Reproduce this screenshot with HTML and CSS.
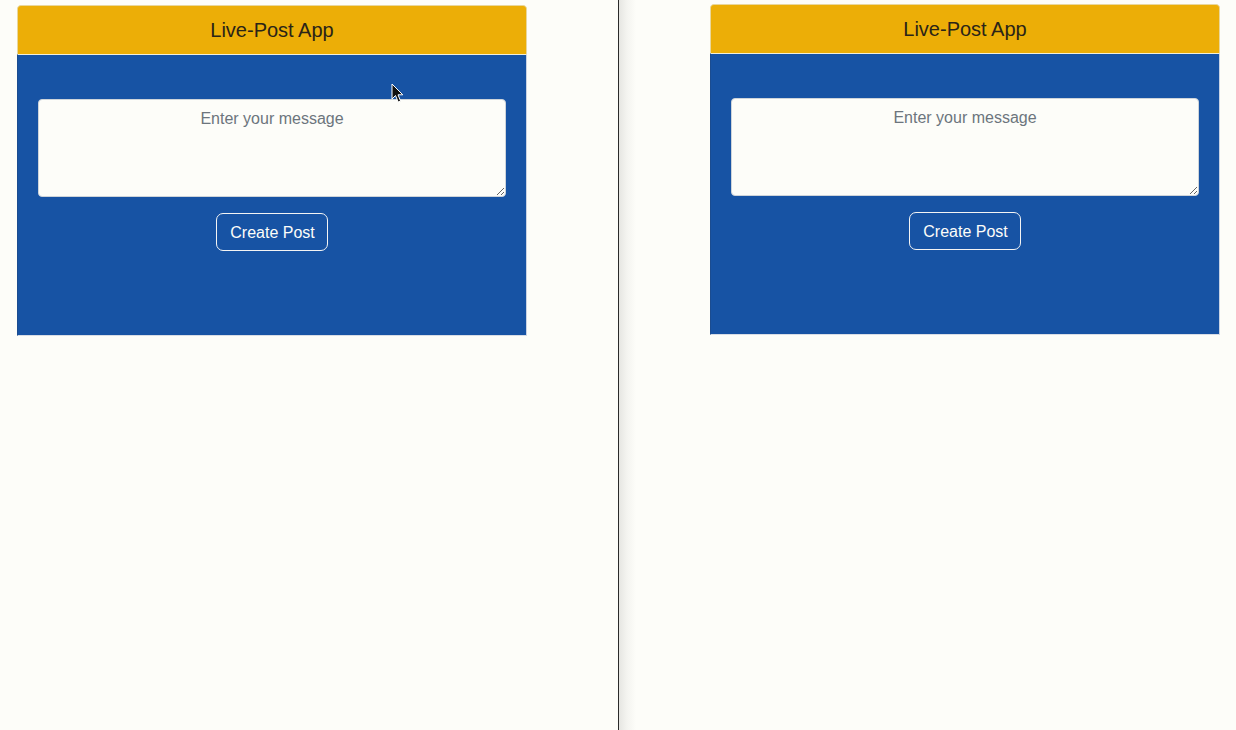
FILE: index.html
```html
<!DOCTYPE html>
<html lang="en">
<head>
<meta charset="utf-8">
<title>Live-Post App</title>
<link rel="stylesheet" href="styles.css">
</head>
<body>
<div class="screen">
  <div class="pane pane-left">
    <div class="card">
      <div class="card-header">Live-Post App</div>
      <div class="card-body">
        <textarea class="message" placeholder="Enter your message"></textarea>
        <button class="btn">Create Post</button>
      </div>
    </div>
    <svg class="cursor" width="14" height="21" viewBox="0 0 14 21"><path d="M1 1 L1 16 L4.5 12.5 L7.2 19 L9.6 18 L7 11.8 L11.8 11.8 Z" fill="#111" stroke="#fff" stroke-width="1"/></svg>
  </div>
  <div class="divider"></div>
  <div class="pane pane-right">
    <div class="card">
      <div class="card-header">Live-Post App</div>
      <div class="card-body">
        <textarea class="message" placeholder="Enter your message"></textarea>
        <button class="btn">Create Post</button>
      </div>
    </div>
  </div>
</div>
</body>
</html>
```
FILE: styles.css
```css
html, body {
  margin: 0;
  padding: 0;
  height: 100%;
  background: #fdfdf9;
  font-family: "Liberation Sans", Arial, sans-serif;
}
.screen {
  display: flex;
  height: 730px;
  width: 1236px;
}
.pane {
  position: relative;
  box-sizing: border-box;
}
.pane-left {
  width: 618px;
  padding: 5px 0 0 17px;
}
.pane-right {
  flex: 1;
  padding: 4px 0 0 91px;
  background: linear-gradient(to right, #e6e6e2 0px, #f4f4f0 8px, #fdfdf9 17px);
}
.divider {
  width: 1px;
  background: #2a2a2a;
}
.card {
  width: 510px;
  box-sizing: border-box;
  border-radius: 4px 4px 0 0;
  overflow: hidden;
}
.card-header {
  height: 49px;
  box-sizing: border-box;
  background: #ecae07;
  border: 1px solid #e9d79c;
  border-bottom: 0;
  border-radius: 4px 4px 0 0;
  color: #2a2418;
  font-size: 20px;
  display: flex;
  align-items: center;
  justify-content: center;
  padding-top: 1px;
}
.card-body {
  background: #1753a4;
  height: 282px;
  box-sizing: border-box;
  border-top: 1px solid #f3efd8;
  border-left: 1px solid #1b4c90;
  border-right: 1px solid #c9d3e3;
  border-bottom: 1px solid #d8dde6;
  padding: 44px 20px 0 20px;
  display: flex;
  flex-direction: column;
  align-items: center;
}
.message {
  width: 100%;
  height: 98px;
  box-sizing: border-box;
  border: 1px solid #ced4da;
  border-radius: 4px;
  background: #fdfdf9;
  padding: 7px 12px 5px;
  font-family: "Liberation Sans", Arial, sans-serif;
  font-size: 16px;
  line-height: 24px;
  text-align: center;
  margin: 0;
  display: block;
}
.message::placeholder {
  color: #6c757d;
}
.btn {
  margin-top: 16px;
  height: 38px;
  padding: 7px 12px 5px 13px;
  border: 1px solid #f4f4f4;
  border-radius: 7px;
  background: transparent;
  color: #fdfdf9;
  font-family: "Liberation Sans", Arial, sans-serif;
  font-size: 16px;
  line-height: 24px;
}
.cursor {
  position: absolute;
  left: 391px;
  top: 83px;
}
```
